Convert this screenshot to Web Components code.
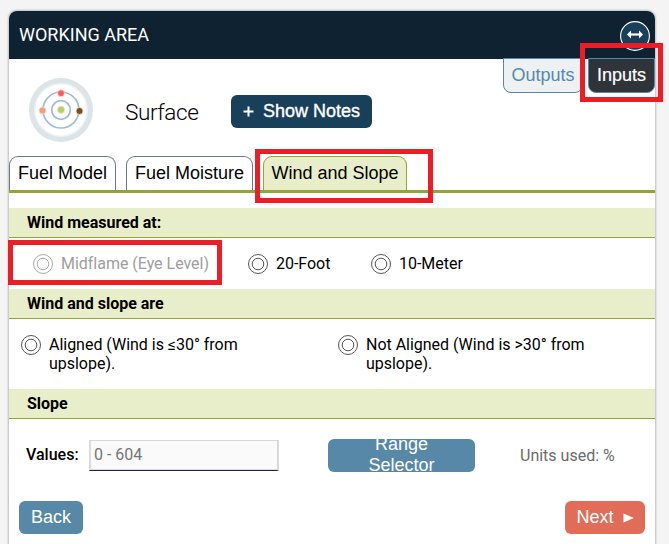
<!DOCTYPE html>
<html lang="en">
<head>
<meta charset="utf-8">
<title>Working Area</title>
<style>
html,body{margin:0;height:100%;overflow:hidden;background:#f4f4f4}
body{font:16px/19px Roboto,sans-serif;color:#000}
</style>
</head>
<body>
<working-area></working-area>
<script>
const define = (name, html, setup) => customElements.define(name, class extends HTMLElement {
  constructor() {
    super();
    const t = document.createElement('template');
    t.innerHTML = html;
    this.attachShadow({mode: 'open'}).append(t.content.cloneNode(true));
    if (setup) setup(this);
  }
});

define('section-title', `<style>
:host{display:block;box-sizing:border-box;height:30px;padding:5px 18px 0;background:#e8eeca;border-bottom:1px solid #95a535;font-weight:700}
</style><slot></slot>`);

define('radio-option', `<style>
:host{display:flex;align-items:flex-start;gap:8px;letter-spacing:-.02px}
:host([disabled]){color:#9e9e9e;--ring:#aaa}
svg{flex:none;display:block}
circle{fill:none;stroke:var(--ring,#555)}
</style><svg width="20" height="20" viewBox="0 0 20 20"><circle cx="10" cy="10" r="9.5"/><circle cx="10" cy="10" r="5.8"/></svg><span><slot></slot></span>`);

define('folder-tab', `<style>
:host{display:block;box-sizing:border-box;height:34px;padding:6px 7.5px 0;border:1px solid #6c7785;border-bottom:0;border-radius:9px 9px 0 0;background:#fff;font:18px/21px "Liberation Sans",Arial,sans-serif;white-space:nowrap;text-align:center}
:host([active]){background:#e8eeca;border-color:#95a535}
</style><slot></slot>`);

define('mode-tab', `<style>
:host{display:block;box-sizing:border-box;height:35px;padding-top:6px;border:1px solid #5788a8;border-radius:0 0 8px 8px;background:#edf1f4;color:#5788a8;font:18px/21px "Liberation Sans",Arial,sans-serif;text-align:center}
:host([active]){background:#2e343a;color:#fff;-webkit-text-stroke:.2px #fff}
</style><slot></slot>`);

define('push-button', `<style>
:host{display:flex;box-sizing:border-box;height:33px;align-items:center;justify-content:center;gap:9px;border-radius:6px;background:#5788a8;color:#fff;font:18px/21px "Liberation Sans",Arial,sans-serif;text-align:center;overflow:hidden}
:host([kind=dark]){background:#19405a;-webkit-text-stroke:.35px #fff}
:host([kind=next]){background:#e16d59}
</style><slot></slot>`);

define('module-icon', `<style>:host,svg{display:block;width:64px;height:64px}</style>
<svg viewBox="0 0 64 64"><circle cx="32" cy="32" r="32" fill="#dce4e7"/><circle cx="32" cy="32" r="27" fill="#eff2f4"/><circle cx="32" cy="32" r="25.5" fill="#fff"/>
<g fill="none" stroke="#a0bbd3" stroke-width="1.7"><circle cx="32" cy="32" r="18"/><circle cx="32" cy="32" r="9.3"/></g>
<g stroke="#e5eaee" stroke-width=".8"><circle cx="32" cy="15.2" r="3.5" fill="#ff5a5a"/><circle cx="13.5" cy="32.5" r="3.5" fill="#ff9b70"/><circle cx="50.5" cy="33" r="3.5" fill="#804c13"/><circle cx="32" cy="31.7" r="3.7" fill="#b8d15b"/></g></svg>`);

define('expand-button', `<style>:host,svg{display:block;width:30px;height:30px}</style>
<svg viewBox="0 0 30 30"><circle cx="15" cy="15" r="14.4" fill="#19405a" stroke="#fff" stroke-width="1.1"/><path d="M10 13.5h10" stroke="#fff" stroke-width="2.2"/><path d="M7 13.5 11 9.5v8zM23 13.5 19 9.5v8z" fill="#fff"/></svg>`);

define('mark-box', `<style>:host{position:absolute;box-sizing:border-box;border:5px solid #ee1c25;pointer-events:none}</style>`,
  el => { const [l, t, w, h] = el.getAttribute('box').split(' ');
    const s = document.createElement('style');
    s.textContent = `:host{left:${l}px;top:${t}px;width:${w}px;height:${h}px}`;
    el.shadowRoot.append(s); });

define('working-area', `<style>
:host{display:block;position:relative;width:669px;height:544px;box-sizing:border-box;padding:11px 14px 0 9px;overflow:hidden}
.card{height:560px;background:#fff;border-radius:8px 8px 0 0;box-shadow:0 0 3px rgba(0,0,0,.45)}
header{display:flex;justify-content:space-between;align-items:flex-start;box-sizing:border-box;height:48px;padding:10px 5px 0 10px;background:#0f2231;border-radius:8px 8px 0 0;color:#fff;font-size:18px;line-height:28px}
.top{display:flex;height:97px;align-items:flex-start}
module-icon{margin:19px 0 0 20px}
h1{margin:38px 0 0 32px;width:106px;font:300 22.5px/30px Roboto,sans-serif;letter-spacing:-.4px}
.notes{width:141px;margin-top:36px}
.modes{display:flex;gap:5px;margin:-1px 0 0 auto}
.modes mode-tab:first-child{width:80px}.modes mode-tab:last-child{width:67px}
nav{display:flex;gap:10px;height:34px;border-bottom:3px solid #95a535;margin-bottom:15px}
nav :nth-child(1){width:107px}nav :nth-child(2){width:127px}nav :nth-child(3){width:144px}
.measure{display:flex;box-sizing:border-box;height:51px;padding:16px 0 0 24px}
.measure :nth-child(1){width:215px}.measure :nth-child(2){width:123px}
.align{display:grid;grid-template-columns:317px 1fr;box-sizing:border-box;height:70px;padding:16px 40px 0 12px}
.align radio-option{width:255px}
.values{display:flex;box-sizing:border-box;height:82px;padding:20px 0 0 17px}
label{font-weight:500;width:63px;line-height:31px}
input{box-sizing:border-box;width:190px;height:31px;margin:1px 49px 0 0;padding:0 4px 2px;border:1px solid #d8d8d8;border-right-width:2px;border-bottom:1px solid #2c1d4d;background:#fafafa;box-shadow:inset 0 -1px #ddd,inset 1px 0 #ddd;font:16px Roboto,sans-serif}
input::placeholder{color:#757575}
.range{width:147px;padding:0 35px 1px}
.units{margin:7px 0 0 45px;color:#6b6b6b}
footer{display:flex;justify-content:space-between;padding:0 10px}
.back{width:64px}.next{width:80px}
</style>
<div class="card">
<header><span>WORKING AREA</span><expand-button></expand-button></header>
<div class="top"><module-icon></module-icon><h1>Surface</h1>
<push-button class="notes" kind="dark"><svg width="11" height="11" viewBox="0 0 11 11"><path d="M5.5 .5v10M.5 5.5h10" stroke="#fff" stroke-width="2"/></svg><span>Show Notes</span></push-button>
<div class="modes"><mode-tab>Outputs</mode-tab><mode-tab active>Inputs</mode-tab></div></div>
<nav><folder-tab>Fuel Model</folder-tab><folder-tab>Fuel Moisture</folder-tab><folder-tab active>Wind and Slope</folder-tab></nav>
<section-title>Wind measured at:</section-title>
<div class="measure"><radio-option disabled>Midflame (Eye Level)</radio-option><radio-option>20-Foot</radio-option><radio-option>10-Meter</radio-option></div>
<section-title>Wind and slope are</section-title>
<div class="align"><radio-option>Aligned (Wind is ≤30° from<br>upslope).</radio-option><radio-option>Not Aligned (Wind is &gt;30° from<br>upslope).</radio-option></div>
<section-title>Slope</section-title>
<div class="values"><label for="v">Values:</label><input id="v" placeholder="0 - 604"><push-button class="range"><span>Range Selector</span></push-button><span class="units">Units used: %</span></div>
<footer><push-button class="back">Back</push-button><push-button class="next" kind="next"><span>Next</span><svg width="11" height="10" viewBox="0 0 11 10"><path d="M.5 .5 10.8 5 .5 9.5z" fill="#fff"/></svg></push-button></footer>
</div>
<mark-box box="580 43 83 59"></mark-box>
<mark-box box="255 149 178 54"></mark-box>
<mark-box box="8 240 214 45"></mark-box>`);
</script>
</body>
</html>
